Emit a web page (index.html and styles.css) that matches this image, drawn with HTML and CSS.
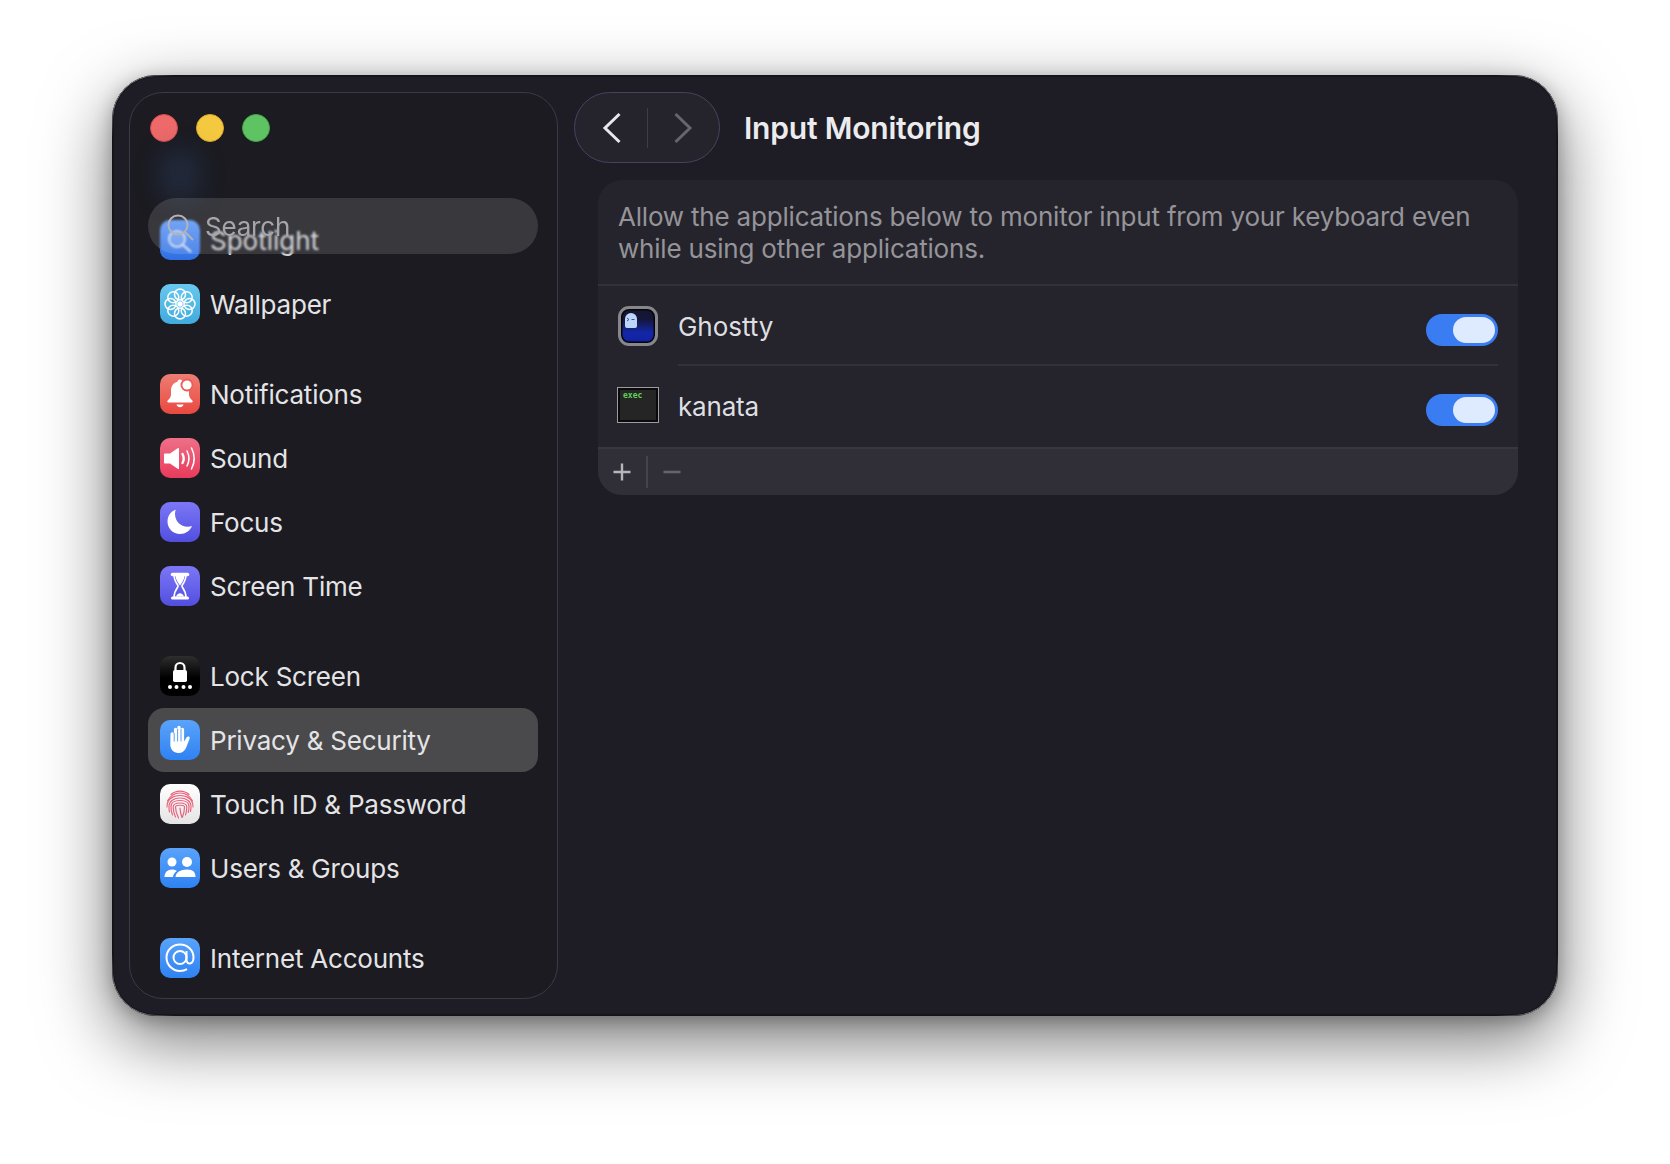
FILE: index.html
```html
<!DOCTYPE html>
<html lang="en">
<head>
    <meta charset="UTF-8">
    <meta name="viewport" content="width=device-width, initial-scale=1.0">
    <title>Input Monitoring</title>
    <link rel="stylesheet" href="styles.css">
</head>
<body>
    <div class="window">
        <aside class="sidebar">
            <div class="lights">
                <span class="light red"></span>
                <span class="light yellow"></span>
                <span class="light green"></span>
            </div>
            <div class="blur-icon"></div>

            <div class="search">
                <svg class="search-glass" viewBox="0 0 32 32" width="32" height="32"><circle cx="13" cy="13" r="9.5"/><path d="M20 20l8 8"/></svg>
                <span>Search</span>
            </div>

            <ul class="list">
                <li class="row under-search">
                    <span class="icon spotlight"><svg viewBox="0 0 40 40"><circle cx="17" cy="19" r="8" fill="rgba(255,255,255,.18)" stroke="#e4e8f2" stroke-width="1.6"/><path d="M23 25l8 7" stroke="#e4e8f2" stroke-width="2" fill="none"/></svg></span>
                    Spotlight
                </li>
                <li class="row">
                    <span class="icon wallpaper"><svg viewBox="0 0 40 40" fill="none" stroke="#fff" stroke-width="1.5">
                        <circle cx="20" cy="10.500" r="5.500"/><circle cx="26.700" cy="13.300" r="5.500"/><circle cx="29.500" cy="20" r="5.500"/><circle cx="26.700" cy="26.700" r="5.500"/><circle cx="20" cy="29.500" r="5.500"/><circle cx="13.300" cy="26.700" r="5.500"/><circle cx="10.500" cy="20" r="5.500"/><circle cx="13.300" cy="13.300" r="5.500"/><circle cx="20" cy="20" r="2" fill="#fff"/>
                    </svg></span>
                    Wallpaper
                </li>

                <li class="row gap">
                    <span class="icon notifications"><svg viewBox="0 0 40 40"><path d="M20 5.500c-1.500 0-2.400 1-2.500 2.300-4.200 1-6.500 4.500-6.500 9v3.700c0 2.700-1.600 4.300-3.500 6.200-.5.600-.2 1.800.8 1.800h23.400c1 0 1.300-1.200.8-1.800-1.900-1.900-3.500-3.500-3.500-6.200v-3.700c0-4.500-2.300-8-6.500-9-.1-1.300-1-2.300-2.500-2.300z" fill="#fff"/><path d="M16.500 30.500h7c-.5 1.800-1.900 2.700-3.500 2.700s-3-.9-3.500-2.700z" fill="#fff"/><circle cx="27" cy="11" r="6.500" fill="#ec5f55"/><circle cx="27" cy="11" r="4.600" fill="#fff"/></svg></span>
                    Notifications
                </li>
                <li class="row">
                    <span class="icon sound"><svg viewBox="0 0 40 40"><path d="M5 15.500h5l8-5.500c.5-.3 1 0 1 .6v19.800c0 .6-.5.900-1 .6l-8-5.500H5c-.6 0-1-.4-1-1v-8c0-.6.400-1 1-1z" fill="#fff"/><g fill="none" stroke="#fff" stroke-linecap="round"><path d="M22.500 16c1.500 2.800 1.500 6.200 0 9" stroke-width="2.400"/><path d="M27 13c2.400 4.600 2.400 10.400 0 15" stroke-width="1.500"/><path d="M31.500 10c3.300 6.400 3.300 14.600 0 21" stroke-width="1.500"/></g></svg></span>
                    Sound
                </li>
                <li class="row">
                    <span class="icon purple"><svg viewBox="0 0 40 40"><path d="M16.500 7.500C10.500 9 7.500 14 7.500 19.500c0 7 5.500 12.500 12.500 12.500 5.500 0 10-3.200 12-8-1.300.5-2.800.7-4.300.7-7.200 0-12.700-5.500-12.700-12.700 0-1.600.2-3.100.9-4.500z" fill="#fff"/></svg></span>
                    Focus
                </li>
                <li class="row">
                    <span class="icon purple"><svg viewBox="0 0 40 40"><path d="M12.500 8.500h15" stroke="#fff" stroke-width="3.500" stroke-linecap="round"/><path d="M12.500 32h15" stroke="#fff" stroke-width="3" stroke-linecap="round"/><path d="M14 9h12c0 5-2.300 8-4 10.500v1c1.700 2.500 4 5.500 4 11H14c0-5.500 2.300-8.500 4-11v-1C16.300 17 14 14 14 9z" fill="none" stroke="#fff" stroke-width="1.600"/><path d="M15.500 10h9c-.2 3.500-2.400 6.800-4.500 9.500-2.100-2.700-4.300-6-4.500-9.500z" fill="#fff"/><path d="M16 30.500c.5-1.800 2.500-3.300 4-3.300s3.500 1.500 4 3.300z" fill="#fff"/></svg></span>
                    Screen Time
                </li>

                <li class="row gap">
                    <span class="icon lock"><svg viewBox="0 0 40 40"><path d="M15.500 15v-3.500a4.500 4.500 0 0 1 9 0V15" fill="none" stroke="#fff" stroke-width="2.200"/><rect x="13" y="14" width="14" height="12" rx="1.800" fill="#fff"/><circle cx="10" cy="31" r="2" fill="#fff"/><circle cx="16.500" cy="31" r="2" fill="#fff"/><circle cx="23.500" cy="31" r="2" fill="#fff"/><circle cx="30" cy="31" r="2" fill="#fff"/></svg></span>
                    Lock Screen
                </li>
                <li class="row selected">
                    <span class="icon blue"><svg viewBox="0 0 40 40"><path d="M10.500 14c0-1.100.8-1.800 1.700-1.800s1.700.7 1.700 1.800V9.500c0-1.100.8-1.800 1.700-1.800s1.700.7 1.700 1.800V7.500c0-1.100.8-1.800 1.700-1.800s1.700.7 1.700 1.800v2c0-1.100.8-1.800 1.700-1.800s1.700.7 1.700 1.800v12l2.400-3.900c.6-1 1.600-1.400 2.400-1s1 1.400.6 2.300l-3.300 8.500c-1.300 3.400-3.900 5.600-7.800 5.600-5 0-8.100-3.500-8.100-8.700z" fill="#fff"/><path d="M14.200 13v8.500M17.600 9v12.500M21 9v12.500" stroke="#4a93f5" stroke-width=".9"/></svg></span>
                    Privacy &amp; Security
                </li>
                <li class="row">
                    <span class="icon touchid"><svg viewBox="0 0 40 40" fill="none" stroke="#e9607a" stroke-width="1.150" stroke-linecap="round">
                        <path d="M11 10.500c5-4.500 13-4.500 18 0"/>
                        <path d="M7.500 17c3-6 8-8 12.500-8s9.500 2 12.500 8"/>
                        <path d="M7 23c0-8 6-11.500 13-11.500S33 15 33 23"/>
                        <path d="M9.500 28c-.5-2-.5-4-.5-5.500C9 17 14 14 20 14s11 3 11 8.500c0 1.500 0 3-.5 5"/>
                        <path d="M12.500 31c-1-2.500-1.500-5.500-1.500-8.500 0-4 4-6 9-6s9 2 9 6c0 2-.2 4-.8 6"/>
                        <path d="M15.500 33c-1.500-3-2.300-6.500-2.300-10 0-2.500 3-4 6.800-4s6.800 1.500 6.800 4c0 2.500-.4 5.500-1.300 8"/>
                        <path d="M18.500 34c-1.700-3.500-3-7-3-11 0-1 2-1.800 4.500-1.800s4.500.8 4.500 1.800c0 3-.7 6.500-2 10"/>
                        <path d="M20 24c0 3.500 1 6.800 2 9.500"/>
                    </svg></span>
                    Touch ID &amp; Password
                </li>
                <li class="row">
                    <span class="icon blue"><svg viewBox="0 0 40 40" fill="#fff"><circle cx="12" cy="14" r="4.500"/><circle cx="27" cy="14" r="5"/><path d="M4.500 29c0-4.500 3-7.500 7.500-7.500 2 0 3.600.5 4.800 1.500-2.200 1.500-3.600 3.700-3.800 6z"/><path d="M15.500 29c0-4.500 5-7.500 11.500-7.500S35.500 24.500 35.500 29z"/></svg></span>
                    Users &amp; Groups
                </li>

                <li class="row gap">
                    <span class="icon blue"><svg viewBox="0 0 40 40" fill="none" stroke="#fff" stroke-width="2"><circle cx="20" cy="19.500" r="6.500"/><path d="M26.500 13v9c0 5 7 5 7-2.500C33.500 12 27.500 6.500 20 6.500S6.500 12 6.500 19.500 12.500 33 20 33c2.700 0 5-.6 7-1.800"/></svg></span>
                    Internet Accounts
                </li>
            </ul>
        </aside>

        <main class="main">
            <div class="toolbar">
                <div class="nav-pill">
                    <svg class="chevron" viewBox="0 0 20 32" width="20" height="32"><path d="M17.500 2L3 16l14.500 14"/></svg>
                    <span class="nav-line"></span>
                    <svg class="chevron off" viewBox="0 0 20 32" width="20" height="32"><path d="M2.500 2L17 16 2.500 30"/></svg>
                </div>
                <h1>Input Monitoring</h1>
            </div>

            <section class="card">
                <p class="desc">Allow the applications below to monitor input from your keyboard even while using other applications.</p>

                <div class="app first">
                    <span class="app-icon ghostty">
                        <span class="ghost">
                            <svg viewBox="0 0 12 15" width="12" height="15"><path d="M2 5l2 1.500L2 8" fill="none" stroke="#33456e" stroke-width=".9"/><path d="M6.500 6.500h3" stroke="#33456e" stroke-width=".9"/></svg>
                        </span>
                    </span>
                    <span class="app-name">Ghostty</span>
                    <span class="toggle"><span class="thumb"></span></span>
                </div>
                <div class="app second">
                    <span class="app-icon kanata">exec</span>
                    <span class="app-name">kanata</span>
                    <span class="toggle"><span class="thumb"></span></span>
                </div>

                <div class="card-foot">
                    <svg viewBox="0 0 20 20" width="20" height="20" class="foot-btn"><path d="M10 1.500v17M1.500 10h17"/></svg>
                    <span class="foot-line"></span>
                    <svg viewBox="0 0 20 20" width="20" height="20" class="foot-btn off"><path d="M1.500 10h17"/></svg>
                </div>
            </section>
        </main>
    </div>
</body>
</html>
```

FILE: styles.css
```css
* {
    box-sizing: border-box;
}
body {
    margin: 0;
    height: 1164px;
    overflow: hidden;
    background: #fff;
    font-family: 'Inter', 'Roboto', sans-serif;
    color: #e4e4e6;
}
.window {
    position: relative;
    width: 1446px;
    height: 941px;
    margin: 75px 0 0 112px;
    padding: 16px 0 16px 16px;
    display: flex;
    background: #1e1d26;
    border: 1px solid #141417;
    border-radius: 44px;
    box-shadow: inset 0 0 0 1px #16161a, 0 24px 70px rgba(0, 0, 0, 0.55), 0 4px 18px rgba(0, 0, 0, 0.25);
}
/* lighter rim that only shows round the corners */
.window::before {
    content: "";
    position: absolute;
    inset: -1px;
    border: 1.5px solid #77777c;
    border-radius: 44px;
    pointer-events: none;
    -webkit-mask-image:
        radial-gradient(circle at 0 0, #000 30px, transparent 62px),
        radial-gradient(circle at 100% 0, #000 30px, transparent 62px),
        radial-gradient(circle at 0 100%, #000 30px, transparent 62px),
        radial-gradient(circle at 100% 100%, #000 30px, transparent 62px);
    mask-image:
        radial-gradient(circle at 0 0, #000 30px, transparent 62px),
        radial-gradient(circle at 100% 0, #000 30px, transparent 62px),
        radial-gradient(circle at 0 100%, #000 30px, transparent 62px),
        radial-gradient(circle at 100% 100%, #000 30px, transparent 62px);
}

/* sidebar */
.sidebar {
    position: relative;
    width: 429px;
    flex-shrink: 0;
    background: #1b1b21;
    border: 1px solid #3a3947;
    border-radius: 34px;
    overflow: hidden;
}
.lights {
    height: 115px;
    padding: 21px 0 0 20px;
    display: flex;
    gap: 18px;
}
.light {
    width: 28px;
    height: 28px;
    border-radius: 50%;
}
.red {
    background: #ee6a6a;
    border: 1px solid #d24a4a;
}
.yellow {
    background: #f5c93f;
    border: 1px solid #d9a92c;
}
.green {
    background: #5ec463;
    border: 1px solid #44a84a;
}
.blur-icon {
    position: absolute;
    left: 30px;
    top: 58px;
    width: 40px;
    height: 48px;
    background: #2a3d5e;
    opacity: 0.45;
    filter: blur(12px);
}
.search {
    position: absolute;
    left: 18px;
    top: 105px;
    width: 390px;
    height: 56px;
    padding-left: 17px;
    display: flex;
    align-items: center;
    gap: 8px;
    background: rgba(255, 255, 255, 0.13);
    backdrop-filter: blur(1px);
    border-radius: 28px;
    font-size: 26px;
    letter-spacing: -0.2px;
    color: #a6a6aa;
    z-index: 2;
}
.search-glass {
    fill: none;
    stroke: #b4b4b8;
    stroke-width: 2;
    margin-top: 3px;
}
.list {
    list-style: none;
    margin: 0 19px 0 18px;
    padding: 0;
}
.row {
    height: 64px;
    padding-left: 12px;
    display: flex;
    align-items: center;
    gap: 10px;
    font-size: 26px;
    letter-spacing: -0.22px;
    border-radius: 16px;
    white-space: nowrap;
}
.row.gap {
    margin-top: 26px;
}
.under-search {
    letter-spacing: 0;
    color: #d2d2d5;
}
.selected {
    background: #4a4a4c;
}
.icon {
    width: 40px;
    height: 40px;
    flex-shrink: 0;
    border-radius: 10px;
    display: block;
}
.icon svg {
    display: block;
    width: 40px;
    height: 40px;
}
.spotlight {
    background: linear-gradient(#5f98f5, #2f6fe4);
}
.wallpaper {
    background: linear-gradient(#68c8ef, #41abdd);
}
.notifications {
    background: linear-gradient(#ee7d73, #e9483f);
}
.sound {
    background: linear-gradient(#ee7088, #e93a5b);
}
.purple {
    background: linear-gradient(#7c77f6, #524fe0);
}
.lock {
    background: linear-gradient(#2e2e2e, #000 55%);
}
.blue {
    background: linear-gradient(#5aa3fb, #2f82f2);
}
.touchid {
    background: linear-gradient(#fff, #e4e4e4);
}

/* main */
.main {
    flex: 1;
    min-width: 0;
}
.toolbar {
    height: 71px;
    margin-left: 16px;
    display: flex;
    align-items: center;
    gap: 24px;
}
.nav-pill {
    width: 146px;
    height: 71px;
    padding: 0 26px 0 27px;
    display: flex;
    align-items: center;
    justify-content: space-between;
    background: #25242d;
    border: 1.5px solid #45435f;
    border-radius: 36px;
}
.chevron {
    fill: none;
    stroke: #e8e8ea;
    stroke-width: 3;
}
.chevron.off {
    stroke: #66666c;
}
.nav-line {
    width: 1.500px;
    height: 40px;
    background: #3e3d46;
}
h1 {
    margin: 0;
    font-size: 30px;
    font-weight: 600;
    letter-spacing: -0.2px;
    color: #ececee;
}
.card {
    margin: 17px 39px 0 40px;
    height: 315px;
    background: #25242c;
    border-radius: 24px;
    overflow: hidden;
}
.desc {
    margin: 0;
    height: 106px;
    padding: 21px 20px 0;
    border-bottom: 2px solid #32313a;
    font-size: 26px;
    line-height: 32px;
    letter-spacing: -0.2px;
    color: #959499;
}
.app {
    display: flex;
    align-items: center;
    padding-left: 20px;
    padding-right: 20px;
    font-size: 26px;
    color: #dfdfe1;
}
.first {
    height: 80px;
}
.second {
    height: 81px;
    padding-bottom: 3px;
}
.app-name {
    flex: 1;
    height: 79px;
    margin-left: 20px;
    padding-top: 2px;
    display: flex;
    align-items: center;
    border-bottom: 2px solid #32313a;
    letter-spacing: -0.05px;
}
.second .app-name {
    border-bottom: none;
    letter-spacing: -0.2px;
}
.app-icon {
    flex-shrink: 0;
    display: block;
    position: relative;
}
.ghostty {
    width: 40px;
    height: 40px;
    border-radius: 11px;
    border: 3px solid #87878b;
    background: linear-gradient(#14162f, #14163a 30%, #1327a8 70%, #1020a0);
    box-shadow: inset 0 0 0 1.5px #050508;
}
.ghost {
    position: absolute;
    left: 4px;
    top: 4px;
    width: 12px;
    height: 15px;
    border-radius: 6px 6px 2px 2px;
    background: #bcd6fb;
}
.ghost svg {
    display: block;
}
.kanata {
    width: 42px;
    height: 36px;
    margin-left: -1px;
    margin-right: -1px;
    padding: 3px 0 0 5px;
    border: 1px solid #9b9ca0;
    background: #252525;
    box-shadow: inset 0 0 0 2px #0a0a0a;
    font-family: 'DejaVu Sans Mono', monospace;
    font-size: 8px;
    line-height: 9px;
    font-weight: 700;
    color: #62d25a;
}
.toggle {
    position: relative;
    width: 72px;
    height: 32px;
    flex-shrink: 0;
    margin-left: -72px;
    margin-top: 8px;
    background: #3a7cf2;
    border-radius: 16px;
}
.second .toggle {
    margin-top: 10px;
}
.thumb {
    position: absolute;
    right: 3px;
    top: 3px;
    width: 42px;
    height: 26px;
    background: #deeafe;
    border-radius: 13px;
}
.card-foot {
    height: 48px;
    padding-left: 14px;
    display: flex;
    align-items: center;
    background: #302f38;
    border-top: 2px solid #383741;
}
.foot-btn {
    fill: none;
    stroke: #b6b6ba;
    stroke-width: 2.400;
}
.foot-btn.off {
    stroke: #66656d;
}
.foot-line {
    width: 1.500px;
    height: 32px;
    margin: 0 14px;
    background: #45444d;
}
```
